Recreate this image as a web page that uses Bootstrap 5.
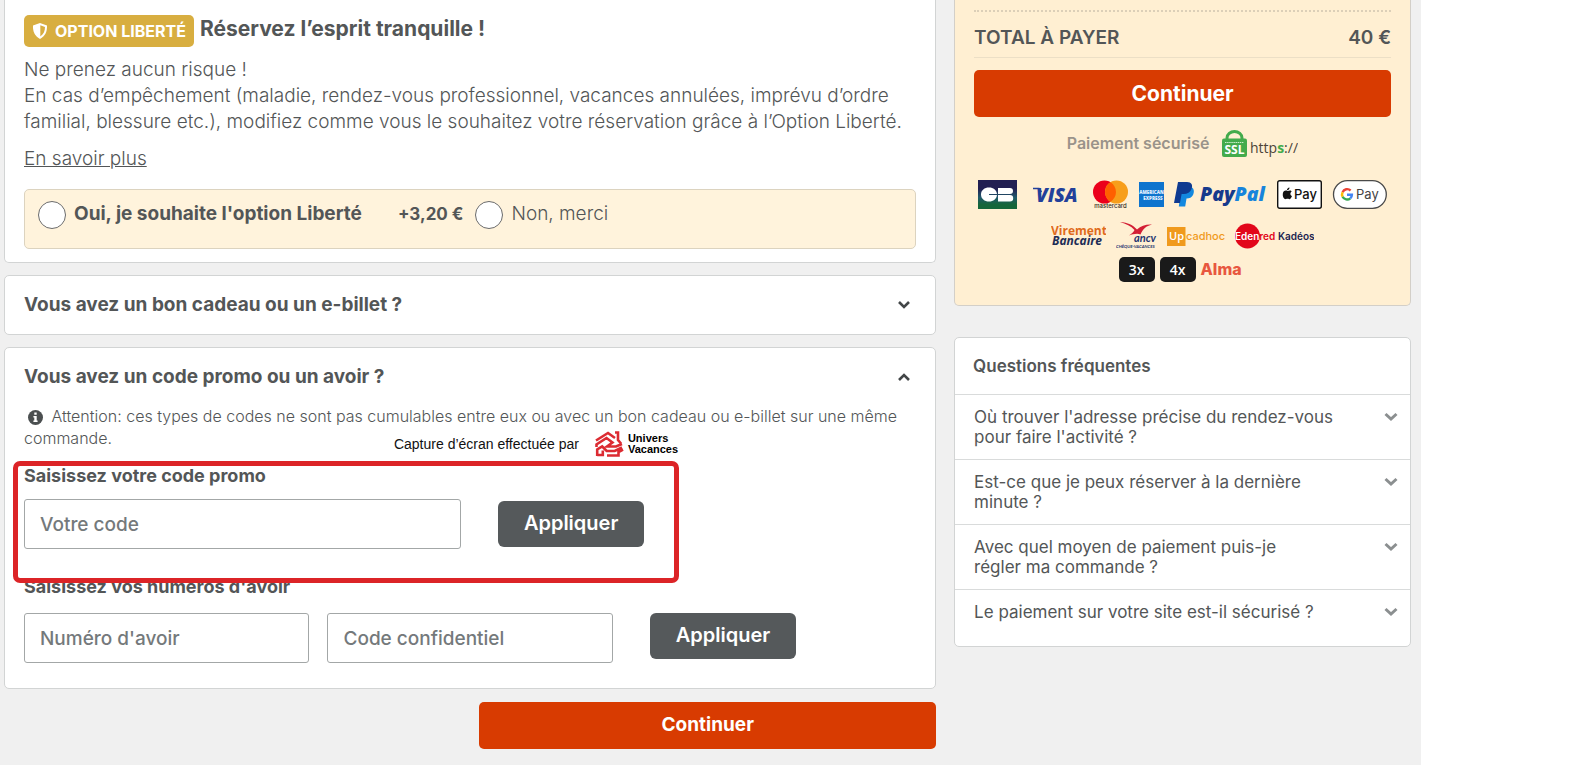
<!DOCTYPE html>
<html lang="fr">
<head>
<meta charset="utf-8">
<meta name="viewport" content="width=device-width, initial-scale=1">
<title>Paiement de votre réservation</title>
<link href="https://cdn.jsdelivr.net/npm/bootstrap@5.3.0/dist/css/bootstrap.min.css" rel="stylesheet">
<style>
  body { font-family: Inter, "Liberation Sans", sans-serif; font-size: 19px; font-weight: 300; line-height: 26px; color: #535657; background: #fff; }
  .checkout { width: 90%; min-width: 1160px; min-height: 100vh; background: #f0f0f0; padding: 0 10px 16px 4px; gap: 18px; }
  .side { width: 457px; flex: none; }
  .panel { --bs-card-border-color: #d2d4d4; --bs-card-border-radius: 5px; --bs-card-inner-border-radius: 4px; color: inherit; background: #fff; }
  main .panel + .panel { margin-top: 12px; }
  .panel-cut { border-top: 0; border-top-left-radius: 0; border-top-right-radius: 0; }
  .pad { padding: 0 19px; }
  .h-line { font-size: 19px; font-weight: 700; line-height: 24px; margin: 0; }
  .form-line { font-size: 18px; }

  .offer { padding-top: 15px; padding-bottom: 13px; }
  .offer-head { gap: 6px; }
  .liberte { background: #d8ae40; color: #fff; font-size: 16px; font-weight: 700; line-height: 32px; padding: 0 8px; border-radius: 5px; gap: 7px; }
  .tranquille { font-size: 21px; font-weight: 700; line-height: 28px; margin: 0; }
  .pitch { margin: 10px 0 11px; }
  .choices { background: #fff3dc; border: 1px solid #dcd3bf; border-radius: 5px; padding: 11px 13px 19px; line-height: 26px; margin-top: 17px; }
  .choices .form-check-input { width: 28px; height: 28px; margin: 0; border: 1px solid #6b6b6b; background-color: #fff; flex: none; }
  .choices .form-check-input + label { margin-left: 8px; }
  .price { font-size: 17px; font-weight: 700; margin: 0 12px 0 36px; }

  .bon { padding-top: 17px; padding-bottom: 17px; }
  .promo { padding-top: 17px; padding-bottom: 25px; }
  .toggle { background: none; border: 0; color: inherit; text-align: left; padding: 0 5px 0 0; width: 100%; display: flex; justify-content: space-between; align-items: center; }
  .note { font-size: 16px; line-height: 22px; margin: 16px 0 0; }
  .code-form { margin-top: 15px; }
  .code-inputs { margin-top: 11px; }
  .avoir-form { margin-top: 26px; }
  .avoir-inputs { margin-top: 14px; }
  .field { height: 50px; border: 1px solid #a3a7a7; border-radius: 3px; padding: 0 15px; font-size: 19px; font-weight: 500; background: #fff; flex: none; }
  .field::placeholder { color: #74797b; opacity: 1; }
  .field-wide { width: 49%; }
  .field-half { width: 32%; }
  .field-half + .field-half { margin-left: 18px; }
  .btn-grey { --bs-btn-bg: #55595b; --bs-btn-color: #fff; --bs-btn-hover-bg: #45494b; --bs-btn-hover-color: #fff; --bs-btn-border-radius: 6px; --bs-btn-font-weight: 600; --bs-btn-font-size: 20px; --bs-btn-border-width: 0; width: 146px; height: 46px; padding: 0 0 2px; margin-left: 37px; }
  .btn-go { --bs-btn-bg: #d83b01; --bs-btn-color: #fff; --bs-btn-hover-bg: #bd3401; --bs-btn-hover-color: #fff; --bs-btn-border-radius: 5px; --bs-btn-border-width: 0; --bs-btn-font-weight: 700; --bs-btn-font-size: 21px; height: 47px; padding: 0; }
  .btn-go-main { --bs-btn-font-size: 19px; width: 49%; }
  .go-line { margin-top: 13px; }
  .go-side { margin-top: 12px; }

  /* frame and credit laid over the promo form */
  .frame { position: absolute; top: -3px; bottom: -34px; left: -11px; right: calc(25% + 14px); border: 5px solid #dc2427; border-radius: 7px; pointer-events: none; }
  .credit { position: absolute; top: -33px; right: calc(25% + 15px); font-family: "Liberation Sans", sans-serif; font-size: 14px; font-weight: 400; line-height: 24px; color: #111; }
  .credit strong { font-size: 11px; line-height: 11px; font-weight: 700; color: #000; }

  .summary { background: #ffefd2; border-color: #d3cfc8; }
  .dashes { border-top: 2px dotted #dccfb8; margin-top: 10px; }
  .total { font-weight: 600; line-height: 28px; padding: 12px 0 5px; border-bottom: 1px solid #ecdfc6; }
  .secure { font-size: 16px; font-weight: 600; color: #9a938a; line-height: 28px; margin-top: 12px; gap: 13px; }
  .pay-row { display: flex; justify-content: center; align-items: center; }
  .pay-row svg, .secure svg, .credit svg { flex: none; display: block; }
  .cards { margin-top: 22px; gap: 10px; }
  .vouchers { margin-top: 13px; gap: 10px; }
  .instalments { margin: 7px 0 23px; gap: 5px; }
  .times { background: #1a1a1a; color: #fff; font: 600 14px/25px "Open Sans", sans-serif; width: 36px; border-radius: 5px; text-align: center; }
  .alma { font: 800 16px/25px Inter, sans-serif; color: #e8573f; padding-right: 5px; }

  .faq { font-size: 17px; font-weight: 400; line-height: 20px; margin-top: 31px; padding-bottom: 12px; }
  .faq h2 { font-size: 17px; font-weight: 600; line-height: 20px; padding: 18px 18px 18px; margin: 0; }
  .faq button { display: flex; width: 100%; justify-content: space-between; border: 0; border-top: 1px solid #d9dbdb; background: none; color: inherit; text-align: left; padding: 12px 12px 12px 19px; gap: 46px; }
  .faq svg { flex: none; margin-top: 5px; }
</style>
</head>
<body>
<div class="checkout d-flex align-items-start">
  <main class="flex-grow-1">
    <section class="card panel panel-cut pad offer">
      <div class="offer-head d-flex align-items-start">
        <span class="liberte d-inline-flex align-items-center">
          <svg width="16" height="16" viewBox="0 0 16 16" aria-hidden="true"><path fill="#fff" d="M8 0 15 2.600c.3 6-1.800 10.800-7 13.400C2.800 13.400.7 8.600 1 2.600z"/><path fill="#d8ae40" d="M8.300 2.300 13 4c0 4-1.400 7.300-4.700 9.400z"/></svg>
          OPTION LIBERTÉ
        </span>
        <h2 class="tranquille">Réservez l’esprit tranquille !</h2>
      </div>
      <p class="pitch">Ne prenez aucun risque !<br>En cas d’empêchement (maladie, rendez-vous professionnel, vacances annulées, imprévu d’ordre familial, blessure etc.), modifiez comme vous le souhaitez votre réservation grâce à l’Option Liberté.</p>
      <p class="mb-0"><a href="#" class="text-reset">En savoir plus</a></p>
      <div class="choices d-flex align-items-start">
        <input class="form-check-input" type="radio" name="liberte" id="oui">
        <label class="fw-bold" for="oui">Oui, je souhaite l'option Liberté</label>
        <span class="price">+3,20 €</span>
        <input class="form-check-input" type="radio" name="liberte" id="non">
        <label for="non">Non, merci</label>
      </div>
    </section>

    <section class="card panel pad bon">
      <button class="toggle h-line" type="button" aria-expanded="false">Vous avez un bon cadeau ou un e-billet ?
        <svg width="14" height="10" viewBox="0 0 14 10" aria-hidden="true"><path d="m2 2 5 5 5-5" fill="none" stroke="#424647" stroke-width="2.600"/></svg>
      </button>
    </section>

    <section class="card panel pad promo">
      <button class="toggle h-line" type="button" aria-expanded="true">Vous avez un code promo ou un avoir ?
        <svg width="14" height="10" viewBox="0 0 14 10" aria-hidden="true"><path d="m2 8 5-5 5 5" fill="none" stroke="#424647" stroke-width="2.600"/></svg>
      </button>
      <p class="note"><svg class="mx-1" width="15" height="15" viewBox="0 0 15 15" aria-hidden="true"><circle cx="7.500" cy="7.500" r="7.500" fill="#4b4f50"/><path fill="#fff" d="M6.300 2.600h2.400v2.200H6.300zM5.400 6h3.300v4.500h.9V12H5.400v-1.500h.9v-3h-.9z"/></svg>
        Attention: ces types de codes ne sont pas cumulables entre eux ou avec un bon cadeau ou e-billet sur une même commande.</p>

      <form class="position-relative code-form">
        <label class="h-line form-line d-block" for="promo">Saisissez votre code promo</label>
        <div class="code-inputs d-flex align-items-center">
          <input class="field field-wide" id="promo" type="text" placeholder="Votre code">
          <button class="btn btn-grey" type="button">Appliquer</button>
        </div>
        <div class="frame"></div>
        <div class="credit d-flex align-items-center">
          <span>Capture d’écran effectuée par</span>
          <svg class="ms-3 me-1" width="29" height="26" viewBox="0 0 29 26" aria-hidden="true"><g fill="none" stroke="#dc2b32" stroke-width="2.600"><path d="M1 9.500 13 2l7 5M20 1.500h3V9l3 3.500"/><path d="M1.500 16V13.500L11.500 7l6 4.500-5.500 4h9l6-2.500"/><path d="M2.200 25v-6.500l5-3 4.500 4.500h8L27 16.500M2.200 24h5.600v-4.500M12 24.500h11.500V21l4.500-2.500"/></g></svg>
          <strong>Univers<br>Vacances</strong>
        </div>
      </form>

      <form class="avoir-form">
        <label class="h-line form-line d-block" for="avoir">Saisissez vos numéros d'avoir</label>
        <div class="avoir-inputs d-flex align-items-start">
          <input class="field field-half" id="avoir" type="text" placeholder="Numéro d'avoir">
          <input class="field field-half" type="text" placeholder="Code confidentiel" aria-label="Code confidentiel">
          <button class="btn btn-grey" type="button">Appliquer</button>
        </div>
      </form>
    </section>

    <div class="go-line d-flex justify-content-end">
      <button class="btn btn-go btn-go-main" type="button">Continuer</button>
    </div>
  </main>

  <aside class="side">
    <section class="card panel panel-cut summary pad">
      <div class="dashes"></div>
      <div class="total d-flex justify-content-between"><span>TOTAL À PAYER</span><span>40 €</span></div>
      <button class="btn btn-go w-100 go-side" type="button">Continuer</button>
      <div class="secure d-flex justify-content-center">
        <span>Paiement sécurisé</span>
        <svg width="76" height="29" viewBox="0 -1 76 29" role="img" aria-label="SSL https"><path d="M5 11V8a7.500 6.500 0 0 1 15 0v3" fill="none" stroke="#43ab4c" stroke-width="3"/><rect y="8.500" width="25" height="18.500" rx="2" fill="#43ab4c"/><path d="M3 12.500h19" stroke="#c9edc9" stroke-dasharray="1.500 .6"/><text x="12.500" y="24" text-anchor="middle" font-family="Open Sans" font-weight="700" font-size="12" fill="#fff">SSL</text><text x="28" y="22.500" font-family="Open Sans" font-weight="400" font-size="14" fill="#4c4438">http<tspan font-weight="700" fill="#43ab4c">s</tspan>://</text></svg>
      </div>
      <div class="pay-row cards">
        <svg width="42" height="29" viewBox="0 0 42 29" role="img" aria-label="CB"><defs><linearGradient id="cb" x1="0" y1="0" x2="0" y2="1"><stop offset=".3" stop-color="#221f52"/><stop offset=".6" stop-color="#20586b"/><stop offset=".85" stop-color="#15663a"/></linearGradient></defs><path fill="url(#cb)" d="M0 0h39v29H0z"/><path fill="#fff" d="M11 7.500c4.500 0 7.500 2.500 8 6.500h-8v1h8c-.5 4-3.500 6.500-8 6.500s-8-2.700-8-7 3.500-7 8-7zM20 8h12a3 3 0 0 1 0 6H20zM20 15h12a3.200 3.200 0 0 1 0 6.400H20z"/></svg>
        <svg width="53" height="29" viewBox="0 0 53 29" role="img" aria-label="Visa"><path d="M3 8.500h6l2.500 3.500" fill="none" stroke="#22409a" stroke-width="1.500"/><text x="6" y="22" font-family="Open Sans" font-weight="800" font-style="italic" font-size="19" fill="#22409a">VISA</text></svg>
        <svg width="36" height="29" viewBox="0 0 36 29" role="img" aria-label="Mastercard"><circle cx="11.500" cy="12" r="11.500" fill="#eb001b"/><circle cx="23.500" cy="12" r="11.500" fill="#f79e1b"/><path fill="#ff5f00" d="M17.500 2.200a11.500 11.500 0 0 1 0 19.600 11.500 11.500 0 0 1 0-19.600z"/><text x="17.500" y="28" text-anchor="middle" font-family="Inter" font-weight="500" font-size="6" fill="#332b22">mastercard</text></svg>
        <svg width="25" height="25" viewBox="0 0 25 25" role="img" aria-label="American Express"><path fill="#0e74ce" d="M0 0h25v25H0z"/><text x="12.500" y="12" text-anchor="middle" font-family="Open Sans" font-weight="800" font-size="4.500" fill="#e4f1ff">AMERICAN</text><text x="14" y="18" text-anchor="middle" font-family="Open Sans" font-weight="800" font-size="4.500" fill="#e4f1ff">EXPRESS</text></svg>
        <svg width="93" height="29" viewBox="0 0 93 29" role="img" aria-label="PayPal"><path fill="#1388df" d="M7.500 7h8c5 0 5 5 3.500 8-1.200 2.500-3.500 3.500-6.500 3.500l-1.300 8H4.800z"/><path fill="#0f3a90" d="M4 2h9c4.500 0 6 3 4.500 7-1.300 3.500-4 5-8 5H7.600L6 23H0z"/><text x="26" y="20.500" font-family="Open Sans" font-weight="800" font-style="italic" font-size="19.500" fill="#173a8c">Pay<tspan fill="#1784dc">Pal</tspan></text></svg>
        <svg width="45" height="29" viewBox="0 0 45 29" role="img" aria-label="Apple Pay"><rect x=".7" y=".7" width="43.600" height="27.600" rx="2" fill="#fff" stroke="#111" stroke-width="1.400"/><path fill="#111" d="M10.500 11c1 0 2-.9 3.200-.5l1 .9c-2 1.400-1.500 3.800.3 4.600-.7 1.900-1.600 3.200-2.700 3.200-.8 0-1-.4-2-.4s-1.200.4-2 .4C6.500 18.800 5.500 16 5.800 13.700 6.200 11 8.200 10 10.500 11zM9.900 10.300C9.900 8.800 11 7.800 12.500 7.500c.1 1.600-1 2.800-2.600 2.800z"/><text x="17" y="19" font-family="Inter" font-weight="500" font-size="13" fill="#111">Pay</text></svg>
        <svg width="55" height="29" viewBox="0 0 55 29" role="img" aria-label="Google Pay"><rect x="1.500" y=".7" width="52.800" height="27.600" rx="13.800" fill="#fff" stroke="#4a4a4a" stroke-width="1.300"/><g fill="none" stroke-width="2.400"><path stroke="#ea4335" d="M10.600 12.200a5 5 0 0 1 8-1.700"/><path stroke="#fbbc04" d="M10.600 16.800a5 5 0 0 1 0-4.600"/><path stroke="#34a853" d="M10.600 16.800a5 5 0 0 0 7.700 1.500"/><path stroke="#4285f4" d="M18.300 18.300c1-.9 1.600-2.100 1.600-3.500H15"/></g><text x="24" y="19" font-family="Inter" font-weight="400" font-size="13" fill="#444">Pay</text></svg>
      </div>
      <div class="pay-row vouchers">
        <svg width="55" height="28" viewBox="0 -2 55 28" role="img" aria-label="Virement Bancaire"><text y="11" font-family="Open Sans" font-weight="700" font-size="12" fill="#e06a1c">Virement</text><text x="1" y="21" font-family="Open Sans" font-weight="700" font-style="italic" font-size="12" fill="#1d2c55">Bancaire</text></svg>
        <svg width="41" height="28" viewBox="0 0 41 28" role="img" aria-label="ANCV chèques vacances"><path fill="#d31f35" d="M4 0c8 .5 13 3 17 7.500C25 3.500 30 2.200 36 2.500 30 4 27 7 24.500 12.500 21 11 16.500 12.500 13 13.500c3-2 4.500-3.500 5.500-5.500C15 4 10 1.800 4 0z"/><text x="18" y="20" font-family="Lato" font-style="italic" font-size="11" font-weight="700" fill="#1f356f">ancv</text><text x="0" y="26" font-family="Lato" font-weight="700" font-style="italic" font-size="4.300" fill="#1f356f">CHÈQUE-VACANCES</text></svg>
        <svg width="58" height="26" viewBox="0 0 58 26" role="img" aria-label="Up cadhoc"><path fill="#f09a1d" d="M0 4h18.500v19H0z"/><text x="2" y="17" font-family="Open Sans" font-weight="600" font-size="11" fill="#fff">Up</text><text x="19" y="17" font-family="Inter" font-weight="500" font-size="11" fill="#f09a1d">cadhoc</text></svg>
        <svg width="79" height="26" viewBox="0 0 79 26" role="img" aria-label="Edenred Kadéos"><circle cx="12.500" cy="13" r="12.500" fill="#e2061a"/><text x="0" y="16.500" font-family="Inter" font-weight="600" font-size="10" fill="#fff">Eden<tspan fill="#e2061a">red</tspan></text><text x="43" y="16.500" font-family="Inter" font-weight="600" font-size="10" fill="#1d2550">Kadéos</text></svg>
      </div>
      <div class="pay-row instalments"><span class="times">3x</span><span class="times">4x</span><span class="alma">Alma</span></div>
    </section>

    <section class="card panel faq">
      <h2>Questions fréquentes</h2>
      <button type="button">Où trouver l'adresse précise du rendez-vous pour faire l'activité ?<svg width="14" height="10" viewBox="0 0 14 10" aria-hidden="true"><path d="m1.500 2 5.500 5 5.500-5" fill="none" stroke="#8b8f90" stroke-width="3"/></svg></button>
      <button type="button">Est-ce que je peux réserver à la dernière minute ?<svg width="14" height="10" viewBox="0 0 14 10" aria-hidden="true"><path d="m1.500 2 5.500 5 5.500-5" fill="none" stroke="#8b8f90" stroke-width="3"/></svg></button>
      <button type="button">Avec quel moyen de paiement puis-je régler&nbsp;ma commande ?<svg width="14" height="10" viewBox="0 0 14 10" aria-hidden="true"><path d="m1.500 2 5.500 5 5.500-5" fill="none" stroke="#8b8f90" stroke-width="3"/></svg></button>
      <button type="button">Le paiement sur votre site est-il sécurisé ?<svg width="14" height="10" viewBox="0 0 14 10" aria-hidden="true"><path d="m1.500 2 5.500 5 5.500-5" fill="none" stroke="#8b8f90" stroke-width="3"/></svg></button>
    </section>
  </aside>
</div>
<script src="https://cdn.jsdelivr.net/npm/bootstrap@5.3.0/dist/js/bootstrap.bundle.min.js"></script>
</body>
</html>
